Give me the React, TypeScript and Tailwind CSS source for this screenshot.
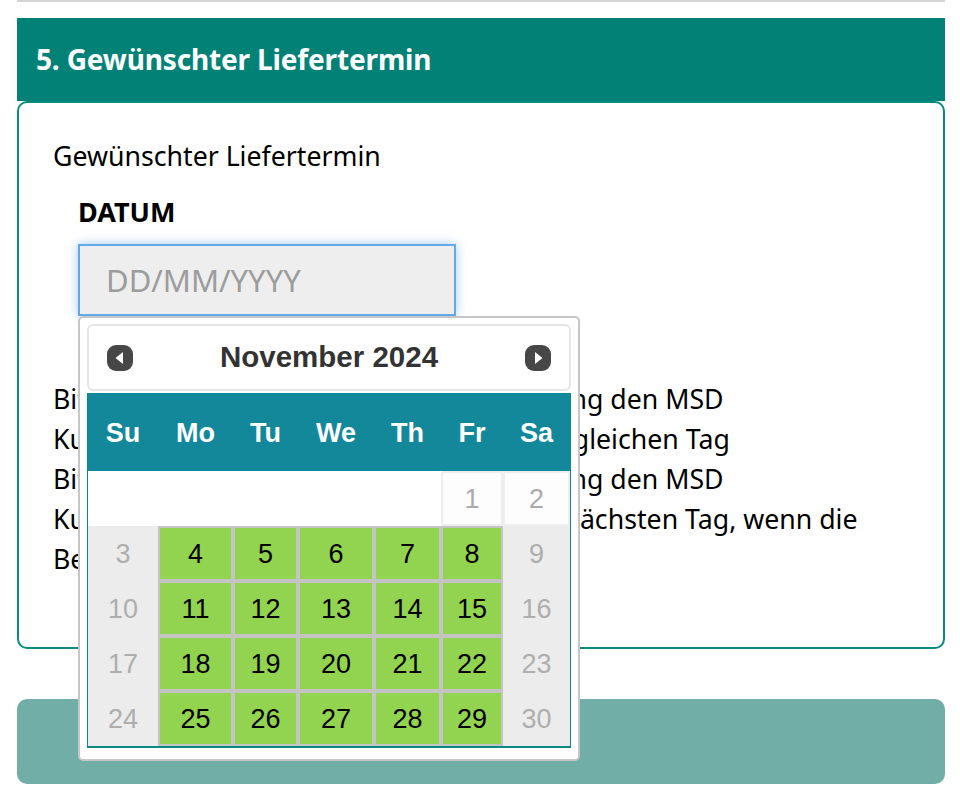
const columns = ["Su", "Mo", "Tu", "We", "Th", "Fr", "Sa"];

const weeks: (number | null)[][] = [
  [null, null, null, null, null, 1, 2],
  [3, 4, 5, 6, 7, 8, 9],
  [10, 11, 12, 13, 14, 15, 16],
  [17, 18, 19, 20, 21, 22, 23],
  [24, 25, 26, 27, 28, 29, 30],
];

const lines = [
  "Bitte beachten Sie: Erreicht diese Bestellung den MSD",
  "Kundenservice vor 12 Uhr, Zustellung am gleichen Tag",
  "Bitte beachten Sie: Erreicht diese Bestellung den MSD",
  "Kundenservice ab 12 Uhr, Zustellung am nächsten Tag, wenn die",
  "Bestellung vollständig vorliegt.",
];

function NavIcon({ dir }: { dir: "left" | "right" }) {
  return (
    <svg width="26" height="26" viewBox="0 0 26 26" aria-hidden="true">
      <rect x="0" y="0" width="26" height="26" rx="9" fill="#474747" />
      {dir === "left" ? (
        <path d="M16 7 V19 L8.5 13 Z" fill="#ffffff" />
      ) : (
        <path d="M10 7 V19 L17.5 13 Z" fill="#ffffff" />
      )}
    </svg>
  );
}

function DayCell({ day, col }: { day: number | null; col: number }) {
  if (day === null) {
    return <div className="h-[55px] bg-white" />;
  }
  if (day <= 2) {
    return (
      <div className="flex h-[55px] items-center justify-center border-2 border-[#eeeeee] bg-[#fdfdfd] pt-[1px] text-[#aaaaaa]">
        {day}
      </div>
    );
  }
  if (col === 0 || col === 6) {
    return (
      <div className="flex h-[55px] items-center justify-center bg-[#ececec] pt-[1px] text-[#aeaeae]">
        {day}
      </div>
    );
  }
  return (
    <div className="flex h-[55px] items-center justify-center border-2 border-[#c4c4c4] bg-[#92d34f] pt-[1px] text-black">
      {day}
    </div>
  );
}

function Datepicker() {
  return (
    <div className="absolute left-0 top-full z-10 h-[445px] w-[502px] rounded-[5px] border-2 border-[#c6c6c6] bg-white px-[7px] pt-[6px] font-['Liberation_Sans',Arial,sans-serif]">
      <div className="flex h-[67px] items-center justify-between rounded-[6px] border-2 border-[#e6e6e6] bg-white px-[18px]">
        <NavIcon dir="left" />
        <span className="text-[29.5px] font-bold text-[#333333]">November 2024</span>
        <NavIcon dir="right" />
      </div>
      <div className="mt-[2px] border-x border-b-2 border-[#0a8a80]">
        <div className="grid h-[78px] grid-cols-[70px_75px_65px_76px_67px_62px_67px] items-center bg-[#14889b] pt-[2px] text-center text-[27px] font-bold text-white">
          {columns.map((c) => (
            <div key={c}>{c}</div>
          ))}
        </div>
        <div className="grid grid-cols-[70px_75px_65px_76px_67px_62px_67px] text-[27px]">
          {weeks.map((week, w) =>
            week.map((day, col) => <DayCell key={`${w}-${col}`} day={day} col={col} />),
          )}
        </div>
      </div>
    </div>
  );
}

export default function App() {
  return (
    <div className="h-[804px] w-[960px] overflow-hidden bg-white pl-[17px] pr-[15px] font-['Noto_Sans',sans-serif] text-black">
      <div className="h-[2px] bg-[#d4d4d4]" />
      <div className="mt-4 flex h-[83px] items-center bg-[#028276] px-[19px] pb-[2px] text-[28px] font-bold tracking-[-0.15px] text-white">
        5. Gewünschter Liefertermin
      </div>
      <div className="h-[548px] rounded-[10px] border-2 border-[#0a8a80] bg-white px-[34px] pt-[35px]">
        <div className="text-[26.7px] leading-[36px]">Gewünschter Liefertermin</div>
        <div className="ml-[25px] mt-[20px] text-[27px] font-bold leading-[36px]">DATUM</div>
        <div className="relative ml-[25px] mt-[14px] w-[378px]">
          <input
            readOnly
            placeholder="DD/MM/YYYY"
            className="block h-[72px] w-full border-2 border-[#64a8ec] bg-[#eeeeee] px-[26px] text-[31px] shadow-[0_0_10px_rgba(100,168,236,0.6)] outline-none placeholder:text-[#9c9c9c]"
          />
          <Datepicker />
        </div>
        <div className="mt-[63px] whitespace-nowrap text-[26.7px] leading-[40px]">
          {lines.map((line, i) => (
            <div key={i}>{line}</div>
          ))}
        </div>
      </div>
      <div className="mt-[50px] h-[85px] rounded-[10px] bg-[#72aea8]" />
    </div>
  );
}
